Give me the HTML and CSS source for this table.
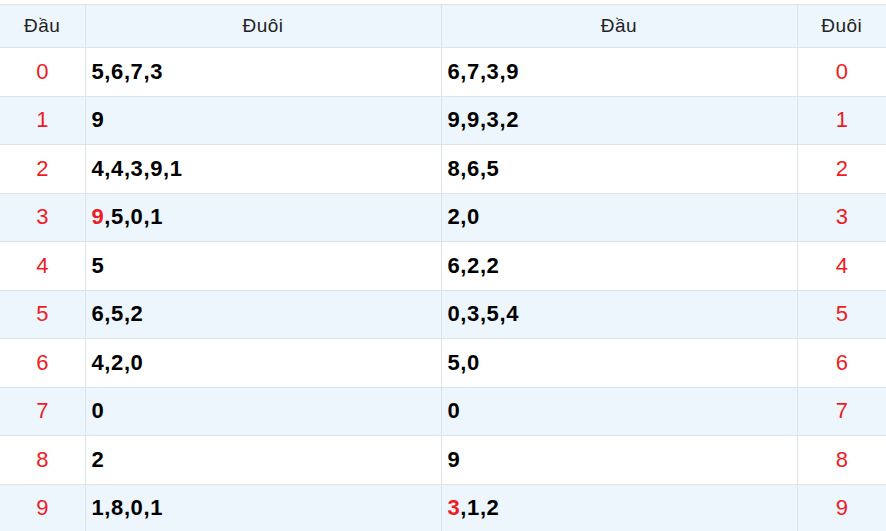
FILE: index.html
```html
<!DOCTYPE html>
<html lang="vi">
<head>
<meta charset="utf-8">
<link rel="stylesheet" href="styles.css">
</head>
<body>
<table class="loto">
  <colgroup>
    <col class="c-num"><col class="c-list"><col class="c-list"><col class="c-num2">
  </colgroup>
  <thead>
    <tr><th>Đầu</th><th>Đuôi</th><th>Đầu</th><th>Đuôi</th></tr>
  </thead>
  <tbody>
    <tr><td class="num">0</td><td class="list">5,6,7,3</td><td class="list">6,7,3,9</td><td class="num">0</td></tr>
    <tr><td class="num">1</td><td class="list">9</td><td class="list">9,9,3,2</td><td class="num">1</td></tr>
    <tr><td class="num">2</td><td class="list">4,4,3,9,1</td><td class="list">8,6,5</td><td class="num">2</td></tr>
    <tr><td class="num">3</td><td class="list"><span class="hot">9</span>,5,0,1</td><td class="list">2,0</td><td class="num">3</td></tr>
    <tr><td class="num">4</td><td class="list">5</td><td class="list">6,2,2</td><td class="num">4</td></tr>
    <tr><td class="num">5</td><td class="list">6,5,2</td><td class="list">0,3,5,4</td><td class="num">5</td></tr>
    <tr><td class="num">6</td><td class="list">4,2,0</td><td class="list">5,0</td><td class="num">6</td></tr>
    <tr><td class="num">7</td><td class="list">0</td><td class="list">0</td><td class="num">7</td></tr>
    <tr><td class="num">8</td><td class="list">2</td><td class="list">9</td><td class="num">8</td></tr>
    <tr><td class="num">9</td><td class="list">1,8,0,1</td><td class="list"><span class="hot">3</span>,1,2</td><td class="num">9</td></tr>
  </tbody>
</table>
</body>
</html>
```
FILE: styles.css
```css
html, body {
  margin: 0;
  padding: 0;
  background: #fff;
}
body {
  padding-top: 4px;
  font-family: "Liberation Sans", Arial, sans-serif;
}
.loto {
  width: 886px;
  border-collapse: collapse;
  table-layout: fixed;
}
.c-num { width: 85px; }
.c-list { width: 356px; }
.c-num2 { width: 89px; }
.loto th, .loto td {
  border: 1px solid #dde3ea;
  padding: 0 6px;
}
.loto tr > :first-child { border-left: none; }
.loto tr > :last-child { border-right: none; }
.loto tbody tr:last-child td { border-bottom: none; }
.loto th {
  height: 42px;
  background: #edf5fd;
  font-weight: normal;
  font-size: 19px;
  letter-spacing: 0.5px;
  color: #222;
  text-align: center;
}
.loto td {
  height: 47.5px;
}
.loto tbody tr:nth-child(even) td { background: #edf5fd; }
.num {
  color: #ee1c25;
  text-align: center;
  font-size: 22px;
}
.list {
  font-weight: bold;
  color: #000;
  text-align: left;
  font-size: 22px;
  letter-spacing: 0.6px;
}
.hot { color: #ee1c25; }
```
